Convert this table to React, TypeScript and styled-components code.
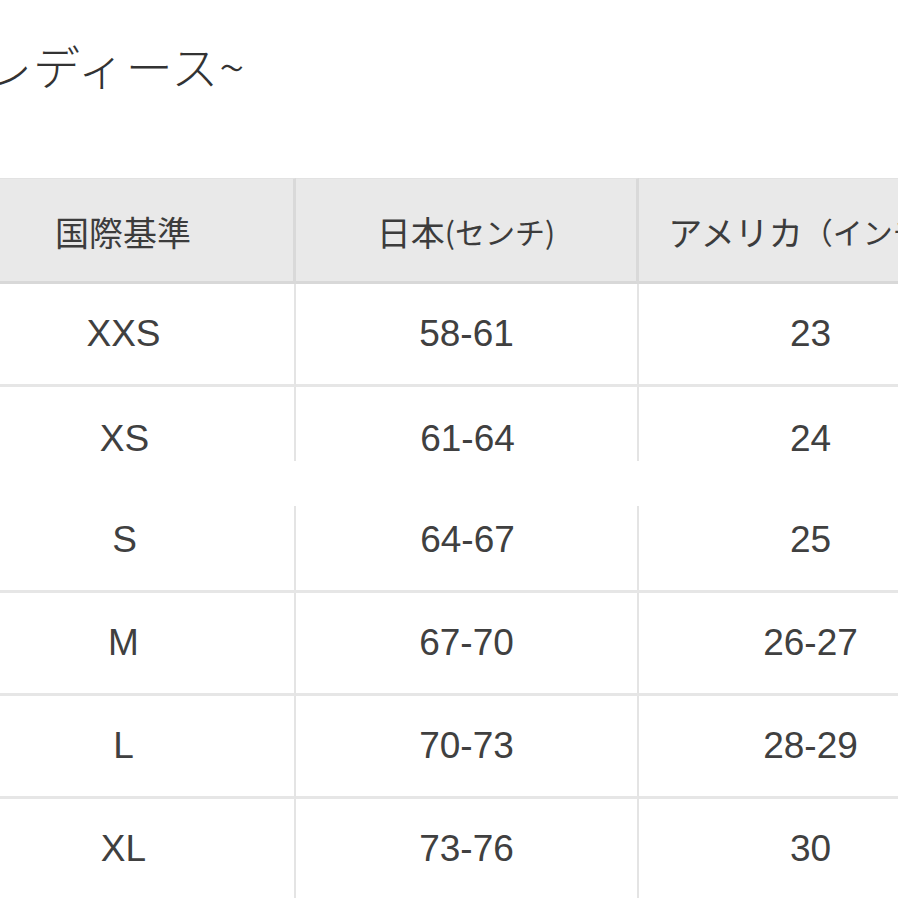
import React from "react";
import styled, { createGlobalStyle } from "styled-components";

const GlobalStyle = createGlobalStyle`
  html, body {
    margin: 0;
    padding: 0;
    background: #ffffff;
    overflow: hidden;
  }
  body {
    font-family: "Liberation Sans", "Noto Sans CJK JP", sans-serif;
    color: #3a3a3a;
  }
`;

const Page = styled.div`
  width: 898px;
  height: 898px;
  overflow: hidden;
  display: flex;
  flex-direction: column;
`;

const Title = styled.h1`
  flex-shrink: 0;
  margin: 38px 0 0 -15px;
  height: 140px;
  font-family: "Noto Sans CJK JP", sans-serif;
  font-size: 47px;
  font-weight: 300;
  line-height: 54px;
  color: #333333;
  letter-spacing: 1px;
`;

const Table = styled.div`
  flex-shrink: 0;
  margin-left: -47px;
  width: 1029px;
  display: grid;
  grid-template-columns: 343px 343px 343px;
`;

const HeadCell = styled.div<{ $last?: boolean }>`
  height: 106px;
  display: flex;
  align-items: center;
  justify-content: center;
  background: #e9e9e9;
  border-top: 1px solid #e2e2e2;
  border-bottom: 3px solid #d8d8d8;
  border-right: ${(p) => (p.$last ? "none" : "3px solid #d9d9d9")};
  box-sizing: border-box;
  font-family: "Noto Sans CJK JP", sans-serif;
  font-size: 34px;
  color: #3c3c3c;
  white-space: nowrap;
  padding-top: 2px;
`;

const Small = styled.span`
  font-size: 30px;
`;

const Cell = styled.div<{ $last?: boolean; $cut?: "top" | "bottom" }>`
  height: 103px;
  display: flex;
  align-items: center;
  justify-content: center;
  box-sizing: border-box;
  font-size: 37px;
  color: #404040;
  border-bottom: ${(p) => (p.$cut === "bottom" ? "none" : "3px solid #e6e6e6")};
  ${(p) =>
    p.$last
      ? ""
      : p.$cut === "bottom"
      ? "background: linear-gradient(#e4e4e4, #e4e4e4) right top / 2px 72% no-repeat;"
      : p.$cut === "top"
      ? "background: linear-gradient(#e4e4e4, #e4e4e4) right bottom / 2px 84% no-repeat;"
      : "border-right: 2px solid #e4e4e4;"}
`;

const rows: { size: string; jp: string; us: string; cut?: "top" | "bottom" }[] = [
  { size: "XXS", jp: "58-61", us: "23" },
  { size: "XS", jp: "61-64", us: "24", cut: "bottom" },
  { size: "S", jp: "64-67", us: "25", cut: "top" },
  { size: "M", jp: "67-70", us: "26-27" },
  { size: "L", jp: "70-73", us: "28-29" },
  { size: "XL", jp: "73-76", us: "30" },
];

export default function App() {
  return (
    <Page>
      <GlobalStyle />
      <Title>レディース~</Title>
      <Table>
        <HeadCell>国際基準</HeadCell>
        <HeadCell>
          日本<Small>(センチ)</Small>
        </HeadCell>
        <HeadCell $last>
          アメリカ<Small>（インチ）</Small>
        </HeadCell>
        {rows.map((r) => (
          <React.Fragment key={r.size}>
            <Cell $cut={r.cut}>{r.size}</Cell>
            <Cell $cut={r.cut}>{r.jp}</Cell>
            <Cell $cut={r.cut} $last>
              {r.us}
            </Cell>
          </React.Fragment>
        ))}
      </Table>
    </Page>
  );
}
